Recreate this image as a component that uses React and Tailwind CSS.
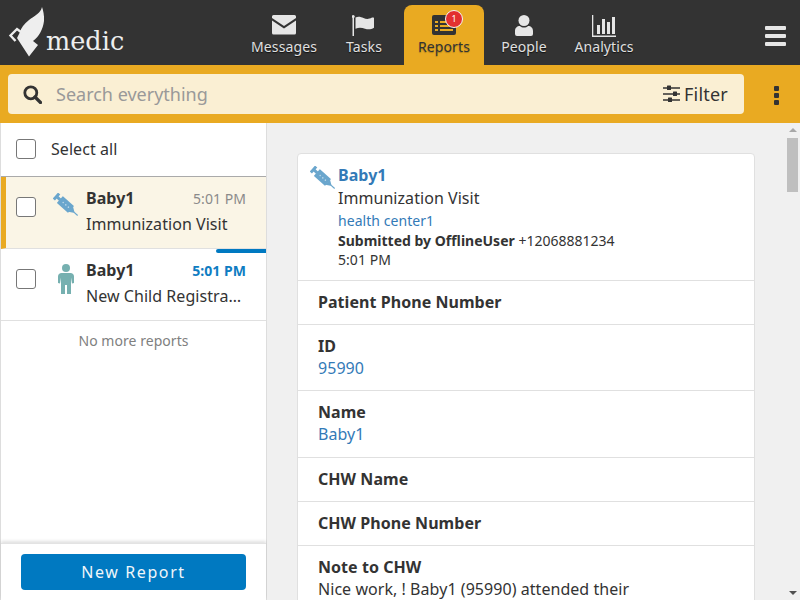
const font = { fontFamily: '"Noto Sans", sans-serif' };

function Logo() {
  return (
    <div className="flex items-start w-[244px] h-[65px] pl-[8px] pt-[6px]">
      <svg width="38" height="52" viewBox="8 6 38 52" className="shrink-0">
        <path fill="#eeeeee" d="M42 7c-1 6-8 9-13 13-5 4-8 8-9 12l-3 6 12 18.500 9-11.500-5-4c6-4 10-12 11-20 .5-6-1-11-2-14z" />
        <path fill="none" stroke="#eeeeee" strokeWidth="2.400" d="M15.500 41l-5-5.500 6.500-6.500 6 4.500" />
      </svg>
      <span className="mt-[19px] text-[25.500px] leading-[32px] text-[#eeeeee] font-['DejaVu_Serif',serif] font-light">medic</span>
    </div>
  );
}

function EnvelopeIcon() {
  return (
    <svg width="24" height="20" viewBox="0 0 24 20">
      <path fill="#e6e6e6" d="M1.500 0h21A1.500 1.500 0 0 1 24 1.500V3l-12 8L0 3V1.500A1.500 1.500 0 0 1 1.500 0z" />
      <path fill="#e6e6e6" d="M0 5.500l12 8 12-8V18a1.500 1.500 0 0 1-1.500 1.500h-21A1.500 1.500 0 0 1 0 18z" />
    </svg>
  );
}

function FlagIcon() {
  return (
    <svg width="24" height="22" viewBox="0 0 24 22">
      <rect x="0.500" y="1" width="1.500" height="20" fill="#e6e6e6" />
      <circle cx="1.200" cy="1.500" r="1.500" fill="#e6e6e6" />
      <path fill="#e6e6e6" d="M3.500 2.500c3-1.500 5.500-.5 8 .5s5 1.500 8.500-.5c.8 0 2 .2 2 .2v10c-3 2-6 2-9 1s-6-1.500-9.500 0z" />
    </svg>
  );
}

function ReportsIcon() {
  return (
    <svg width="24" height="20" viewBox="0 0 24 20">
      <rect width="24" height="20" rx="2" fill="#333333" />
      <rect x="3" y="6" width="3" height="2" fill="#e9aa22" />
      <rect x="3" y="10" width="3" height="2" fill="#e9aa22" />
      <rect x="3" y="14" width="3" height="2" fill="#e9aa22" />
      <rect x="8" y="6" width="13" height="2" fill="#e9aa22" />
      <rect x="8" y="10" width="13" height="2" fill="#e9aa22" />
      <rect x="8" y="14" width="13" height="2" fill="#e9aa22" />
    </svg>
  );
}

function PersonIcon() {
  return (
    <svg width="18" height="21" viewBox="0 0 18 21">
      <circle cx="9" cy="5.500" r="5.500" fill="#e6e6e6" />
      <path fill="#e6e6e6" d="M0 16c0-3 2-5 5-5 1 1 2.500 1.500 4 1.500s3-.5 4-1.500c3 0 5 2 5 5v3a2 2 0 0 1-2 2H2a2 2 0 0 1-2-2z" />
    </svg>
  );
}

function AnalyticsIcon() {
  return (
    <svg width="24" height="22" viewBox="0 0 24 22">
      <path fill="#e6e6e6" d="M0 0h1.300v20.500H24V22H0z" />
      <rect x="5" y="10" width="3" height="9" fill="#e6e6e6" />
      <rect x="10" y="4" width="3" height="15" fill="#e6e6e6" />
      <rect x="15" y="7" width="3" height="12" fill="#e6e6e6" />
      <rect x="20" y="2" width="3" height="17" fill="#e6e6e6" />
    </svg>
  );
}

function NavTab({ label, active, badge, children }) {
  return (
    <div className={active
      ? 'relative w-[80px] h-[60px] mt-[5px] rounded-t-lg bg-[#e9aa22] flex flex-col items-center'
      : 'relative w-[80px] h-[60px] mt-[5px] flex flex-col items-center'}>
      <div className="h-[32px] pt-[10px] flex items-start justify-center">{children}</div>
      <span className={active
        ? 'text-[14px] tracking-[0.100px] leading-[20px] text-[#333333] [text-shadow:0_1px_1px_rgba(0,0,0,0.25)]'
        : 'text-[14px] tracking-[0.100px] leading-[20px] text-[#e0e0e0] [text-shadow:0_1px_1px_rgba(0,0,0,0.7)]'}>{label}</span>
      {badge && (
        <span className="absolute left-[41px] top-[5px] w-[18px] h-[18px] rounded-full bg-[#e33030] border border-[#f5f5f5] text-white text-[9px] leading-[16px] text-center">
          {badge}
        </span>
      )}
    </div>
  );
}

function Syringe() {
  return (
    <svg width="26" height="25" viewBox="0 0 26 25">
      <g transform="translate(3.500 3.500) rotate(42)" fill="#6aa6cd">
        <rect x="-1.500" y="-4" width="3" height="8" />
        <rect x="1" y="-1.500" width="4" height="3" />
        <rect x="4.500" y="-4.500" width="15" height="9" rx="0.500" />
        <path d="M19 -3.500L23.500 -0.600V0.600L19 3.500z" />
        <rect x="23" y="-0.600" width="5.500" height="1.200" />
        <circle cx="9" cy="0" r="0.800" fill="#b9d6e8" />
        <circle cx="12.500" cy="0" r="0.800" fill="#b9d6e8" />
        <circle cx="16" cy="0" r="0.800" fill="#b9d6e8" />
      </g>
    </svg>
  );
}

function ChildIcon() {
  return (
    <svg width="16" height="30" viewBox="0 0 16 30">
      <circle cx="8" cy="4" r="4" fill="#76b0b0" />
      <path fill="#76b0b0" d="M3.500 9h9c2 0 3.500 1.500 3.500 3.500V19l-2 .5-1-6V30H9v-9H7v9H3V13.500l-1 6-2-.5v-6.500C0 10.500 1.500 9 3.500 9z" />
    </svg>
  );
}

function Checkbox() {
  return <span className="block w-[20px] h-[20px] rounded-[3px] border border-[#777777] bg-white shrink-0" />;
}

function ReportRow({ icon, name, title, time, unread, selected }) {
  return (
    <div className={selected
      ? 'flex h-[72px] bg-[#faf5e6] border-l-[5px] border-[#e9aa22] border-b border-b-[#e0e0e0] pl-[10px] pr-[20px]'
      : 'flex h-[72px] border-b border-[#e0e0e0] pl-[15px] pr-[20px]'}>
      <div className="pt-[20px] w-[36px] shrink-0"><Checkbox /></div>
      <div className="w-[34px] shrink-0 pt-[16px]">{icon}</div>
      <div className="flex-1 min-w-0 pt-[10px]">
        <div className="flex justify-between items-baseline">
          <span className="font-bold text-[16px] leading-[22px] text-[#333333]">{name}</span>
          <span className={unread ? 'text-[14px] font-bold text-[#0f7dc2]' : 'text-[14px] text-[#8a8a8a]'}>{time}</span>
        </div>
        <div className="pr-[3px] text-[16px] leading-[22px] mt-[4px] text-[#333333] truncate">{title}</div>
      </div>
    </div>
  );
}

function Field({ label, value, link }) {
  return (
    <div className="border-t border-[#e0e0e0] px-[20px] py-[10px]">
      <div className="font-bold text-[16px] leading-[23px] text-[#333333]">{label}</div>
      {value && <div className={link ? 'text-[16px] leading-[21.750px] pb-[0.650px] text-[#337ab7]' : 'text-[16px] leading-[21.750px] pb-[0.650px] text-[#333333]'}>{value}</div>}
    </div>
  );
}

export default function App() {
  return (
    <div style={font} className="w-[800px] h-[600px] overflow-hidden flex flex-col bg-white text-[#333333] tracking-[0.050px]">
      <header className="h-[65px] shrink-0 bg-[#333333] flex">
        <Logo />
        <NavTab label="Messages"><EnvelopeIcon /></NavTab>
        <NavTab label="Tasks"><FlagIcon /></NavTab>
        <NavTab label="Reports" active badge="1"><ReportsIcon /></NavTab>
        <NavTab label="People"><PersonIcon /></NavTab>
        <NavTab label="Analytics"><AnalyticsIcon /></NavTab>
        <div className="ml-auto mr-[14px] mt-[26px] flex flex-col gap-[4px] w-[21px]">
          <span className="block h-[4px] rounded-[1px] bg-[#e6e6e6]" />
          <span className="block h-[4px] rounded-[1px] bg-[#e6e6e6]" />
          <span className="block h-[4px] rounded-[1px] bg-[#e6e6e6]" />
        </div>
      </header>

      <div className="h-[58px] shrink-0 bg-[#e9aa22] flex items-start pt-[9px] pl-[8px]">
        <div className="w-[736px] h-[40px] rounded-[4px] bg-[#faefd3] flex items-center pl-[15px] pr-[16px]">
          <svg width="19" height="19" viewBox="0 0 19 19" className="shrink-0">
            <circle cx="7.800" cy="7.800" r="6" fill="none" stroke="#333333" strokeWidth="2.800" />
            <path d="M12 12l5.500 5.500" stroke="#333333" strokeWidth="3.200" strokeLinecap="round" />
          </svg>
          <span className="ml-[14px] text-[18px] tracking-normal text-[#999999]">Search everything</span>
          <div className="ml-auto flex items-center gap-[3px]">
            <svg width="18" height="18" viewBox="0 0 18 18">
              <path d="M0 3h17M0 9h17M0 15h17" stroke="#333333" strokeWidth="1.500" />
              <rect x="4" y="0.500" width="4" height="4.500" rx="0.500" fill="#333333" />
              <rect x="10" y="6.500" width="4" height="4.500" rx="0.500" fill="#333333" />
              <rect x="5" y="12.500" width="4" height="4.500" rx="0.500" fill="#333333" />
            </svg>
            <span className="text-[18px] leading-[24px] tracking-[0.200px] text-[#333333]">Filter</span>
          </div>
        </div>
        <div className="ml-[30px] mt-[12px] flex flex-col gap-[2px]">
          <span className="block w-[5px] h-[5px] rounded-[1px] bg-[#333333]" />
          <span className="block w-[5px] h-[5px] rounded-[1px] bg-[#333333]" />
          <span className="block w-[5px] h-[5px] rounded-[1px] bg-[#333333]" />
        </div>
      </div>

      <div className="flex-1 min-h-0 flex">
        <aside className="w-[267px] shrink-0 border-l border-r border-[#dddddd] flex flex-col bg-white">
          <div className="h-[54px] shrink-0 flex items-center pl-[15px] pb-[1px] border-b border-[#aaaaaa]">
            <Checkbox />
            <span className="ml-[15px] text-[16px] text-[#333333]">Select all</span>
          </div>
          <div className="relative flex-1">
            <ReportRow selected icon={<span className="block pl-[1px]"><Syringe /></span>} name="Baby1" title="Immunization Visit" time="5:01 PM" />
            <ReportRow icon={<span className="block pl-[6px] -mt-[1px]"><ChildIcon /></span>} name="Baby1" title="New Child Registration" time="5:01 PM" unread />
            <span className="absolute left-[215px] top-[72px] w-[50px] h-[4px] rounded-l-sm bg-[#0079c1]" />
            <p className="text-center text-[14px] mt-[9px] text-[#808080]">No more reports</p>
          </div>
          <div className="h-[57px] shrink-0 border-t border-[#e3e3e3] shadow-[0_-2px_3px_rgba(0,0,0,0.12)] px-[20px] pt-[10px]">
            <button className="w-[225px] h-[36px] rounded-[4px] bg-[#0079c1] text-[#f0f6fa] text-[16px] tracking-[1.600px]">New Report</button>
          </div>
        </aside>

        <main className="flex-1 min-w-0 bg-[#f0f0f0] flex">
          <div className="flex-1 min-w-0 overflow-hidden pl-[30px] pr-[30px] pt-[30px]">
            <div className="rounded-[4px] bg-white border border-[#e0e0e0]">
              <div className="flex h-[126px] pl-[12px] pt-[10px]">
                <div className="w-[28px] shrink-0 pt-[2px]"><Syringe /></div>
                <div>
                  <div className="font-bold text-[16px] leading-[22px] text-[#337ab7]">Baby1</div>
                  <div className="text-[16px] leading-[24px] text-[#333333]">Immunization Visit</div>
                  <div className="text-[14px] leading-[20px] mt-[1px] text-[#337ab7]">health center1</div>
                  <div className="text-[14px] leading-[20px] tracking-normal text-[#333333]"><b>Submitted by OfflineUser</b> +12068881234</div>
                  <div className="text-[14px] leading-[20px] -mt-[1px] text-[#333333]">5:01 PM</div>
                </div>
              </div>
              <Field label="Patient Phone Number" />
              <Field label="ID" value="95990" link />
              <Field label="Name" value="Baby1" link />
              <Field label="CHW Name" />
              <Field label="CHW Phone Number" />
              <Field label="Note to CHW" value="Nice work, ! Baby1 (95990) attended their" />
            </div>
          </div>
          <div className="w-[15px] shrink-0 flex flex-col items-center pt-[5px] pb-[5px]">
            <span className="block border-x-[4px] border-x-transparent border-b-[4px] border-b-[#a8a8a8]" />
            <span className="block w-[11px] h-[54px] mt-[6px] bg-[#bfbfbf]" />
            <span className="block mt-auto border-x-[4px] border-x-transparent border-t-[4px] border-t-[#505050]" />
          </div>
        </main>
      </div>
    </div>
  );
}
